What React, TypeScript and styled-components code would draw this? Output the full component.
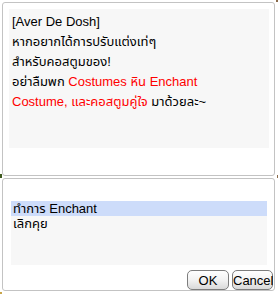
import styled, { createGlobalStyle } from "styled-components";

const GlobalStyle = createGlobalStyle`
    html, body {
        margin: 0;
        padding: 0;
        background: #ffffff;
    }
    body {
        font-family: "Liberation Sans", "Noto Sans Thai", "Noto Sans", sans-serif;
        font-size: 13px;
        color: #000000;
    }
`;

const Window = styled.div`
    position: relative;
    width: 278px;
    height: 294px;
    padding: 2px 3px 0 2px;
    box-sizing: border-box;
    display: flex;
    flex-direction: column;
    gap: 2px;
    background: #ffffff;
`;

const Panel = styled.div<{ $height: number }>`
    height: ${(props) => props.$height}px;
    box-sizing: border-box;
    border: 1px solid #c3c3c3;
    border-radius: 3px;
    background: #ffffff;
`;

const TalkPanel = styled(Panel)`
    padding: 6px 5px 0 6px;
`;

const TalkBox = styled.div`
    height: 139px;
    background: #f7f7f7;
    padding: 3px 3px 0 3px;
    box-sizing: border-box;
`;

const Line = styled.div`
    height: 20px;
    line-height: 20px;
    white-space: nowrap;
`;

const Red = styled.span`
    color: #ff0000;
`;

const MenuPanel = styled(Panel)`
    padding: 22px 1px 0 8px;
    display: flex;
    flex-direction: column;
`;

const MenuList = styled.div`
    height: 65px;
    margin-right: 6px;
    background: #f7f7f7;
`;

const MenuItem = styled.div<{ $selected?: boolean }>`
    height: 15px;
    line-height: 15px;
    padding-left: 2px;
    background: ${(props) => (props.$selected ? "#cddcfa" : "transparent")};
`;

const ButtonRow = styled.div`
    display: flex;
    justify-content: flex-end;
    gap: 3px;
    margin-top: 5px;
`;

const Button = styled.button<{ $width: number }>`
    width: ${(props) => props.$width}px;
    height: 20px;
    padding: 0;
    border: 1px solid #7d7d7d;
    border-radius: 5px;
    background: linear-gradient(#ffffff 0%, #f2f2f2 50%, #d9d9d9 100%);
    font-family: "Liberation Sans", sans-serif;
    font-size: 13px;
    color: #000000;
`;

const Mark = styled.span<{ $color: string }>`
    position: absolute;
    background: ${(props) => props.$color};
`;

export default function App() {
    return (
        <>
            <GlobalStyle />
            <Window>
                <TalkPanel $height={174}>
                    <TalkBox>
                        <Line>[Aver De Dosh]</Line>
                        <Line>หากอยากได้การปรับแต่งเท่ๆ</Line>
                        <Line>สำหรับคอสตูมของ!</Line>
                        <Line>
                            อย่าลืมพก <Red>Costumes หิน Enchant</Red>
                        </Line>
                        <Line>
                            <Red>Costume, และคอสตูมคู่ใจ</Red> มาด้วยละ~
                        </Line>
                    </TalkBox>
                </TalkPanel>
                <MenuPanel $height={113}>
                    <MenuList>
                        <MenuItem $selected>ทำการ Enchant</MenuItem>
                        <MenuItem>เลิกคุย</MenuItem>
                    </MenuList>
                    <ButtonRow>
                        <Button $width={42}>OK</Button>
                        <Button $width={41}>Cancel</Button>
                    </ButtonRow>
                </MenuPanel>
                <Mark $color="#8a6a4a" style={{ right: 0, top: 0, width: 2, height: 2 }} />
                <Mark $color="#8a6a4a" style={{ right: 0, top: 175, width: 1, height: 3 }} />
                <Mark $color="#3f5a1f" style={{ left: 0, top: 174, width: 2, height: 4 }} />
                <Mark $color="#c9a64a" style={{ left: 0, bottom: 0, width: 2, height: 2 }} />
            </Window>
        </>
    );
}
